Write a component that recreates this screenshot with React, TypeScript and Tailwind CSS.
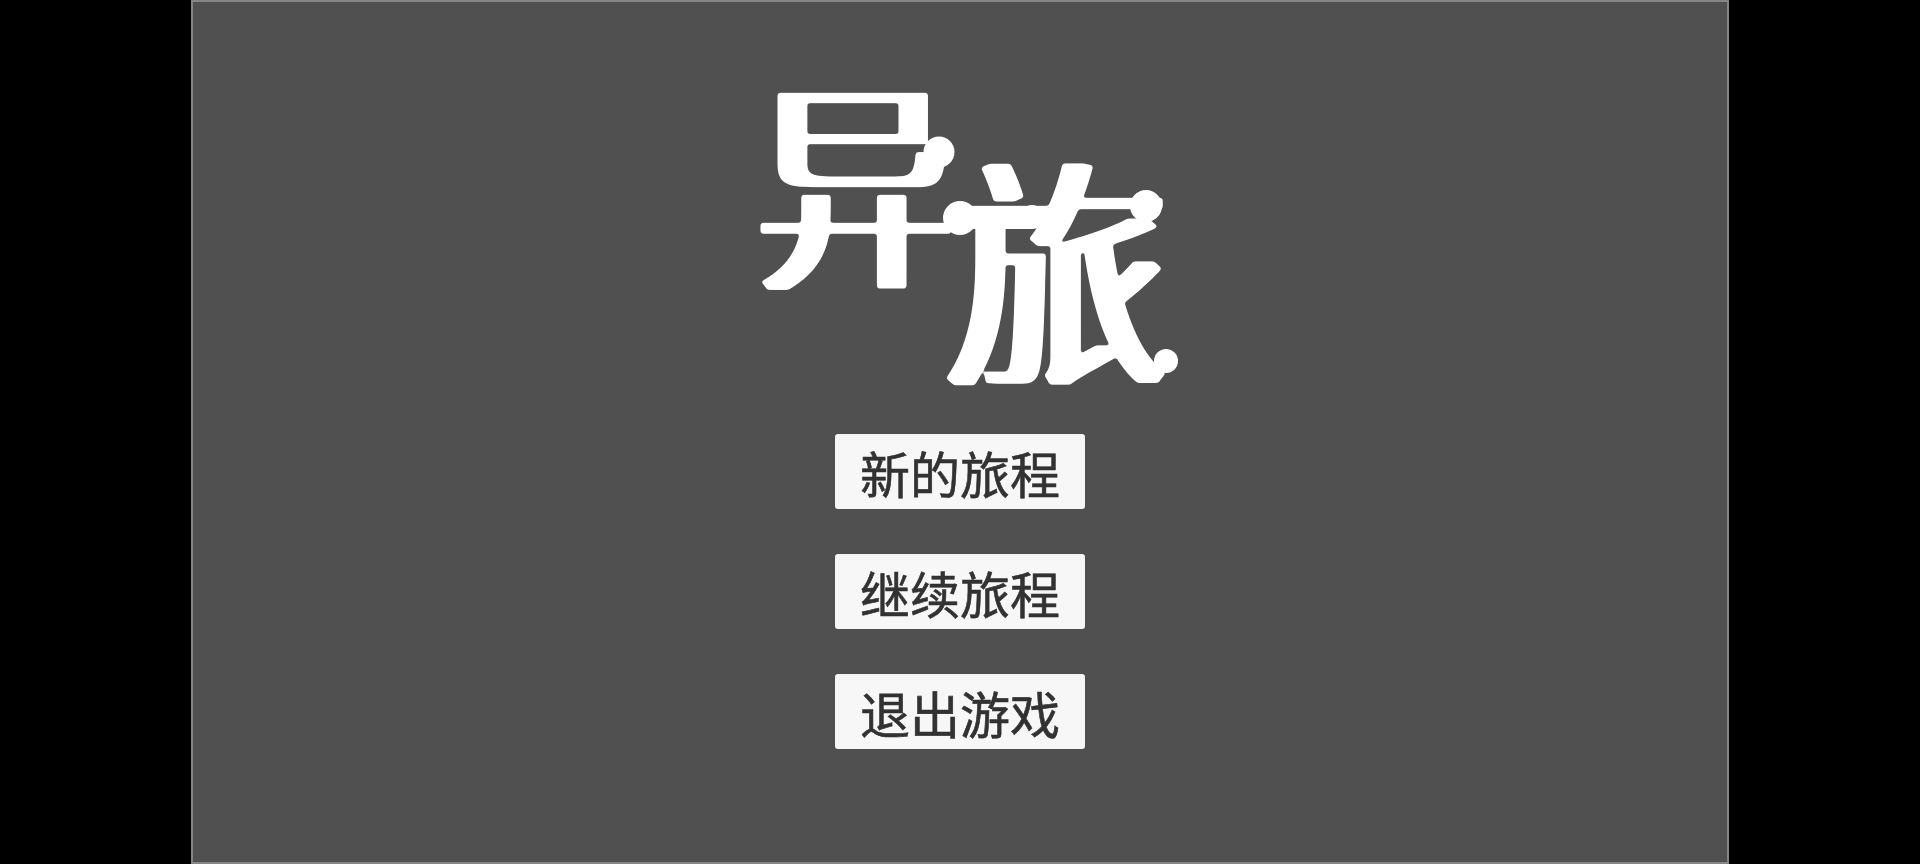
const menuItems = ['新的旅程', '继续旅程', '退出游戏'];

const Title = () => (
  <svg
    viewBox="0 0 440 320"
    className="h-[320px] w-[440px] overflow-visible fill-white font-['Noto_Sans_CJK_SC',sans-serif] font-light"
  >
    {/* widens the vertical strokes and rounds the corners */}
    <filter id="heavy" filterUnits="userSpaceOnUse" x="-20" y="-40" width="500" height="400">
      <feMorphology operator="dilate" radius="10 0" />
      <feGaussianBlur stdDeviation="1.6" />
      <feComponentTransfer>
        <feFuncA type="linear" slope="4" intercept="-1.3" />
      </feComponentTransfer>
    </filter>

    <g filter="url(#heavy)">
      <text transform="translate(20 192) scale(0.87 1.035)" fontSize="220">异</text>
      <text transform="translate(208 288) scale(0.92 1.035)" fontSize="236">旅</text>
    </g>

    {/* bar that joins the two characters */}
    <rect x="215" y="134" width="76" height="15" />

    {/* round stroke ends */}
    <circle cx="199" cy="72" r="15.5" />
    <circle cx="220" cy="138" r="17" />
    <circle cx="292" cy="137" r="12" />
    <circle cx="406" cy="126" r="16" />
    <circle cx="426" cy="281" r="12" />
  </svg>
);

const App = () => {
  return (
    <div className="flex h-screen justify-center overflow-hidden bg-black">
      <div className="flex w-[1538px] flex-col items-center border-2 border-[#858585] bg-[#505050] pt-[78px]">
        <h1>
          <Title />
        </h1>

        <nav className="mt-[34px] flex flex-col gap-[45px]">
          {menuItems.map((item) => (
            <button
              key={item}
              className="flex h-[75px] w-[250px] items-center justify-center rounded-[3px] bg-[#f7f7f7] font-['Noto_Sans_CJK_SC',sans-serif] text-[50px] leading-none font-normal text-[#323232] [-webkit-text-stroke:0.6px_#323232]"
            >
              {item}
            </button>
          ))}
        </nav>
      </div>
    </div>
  );
};

export default App;
